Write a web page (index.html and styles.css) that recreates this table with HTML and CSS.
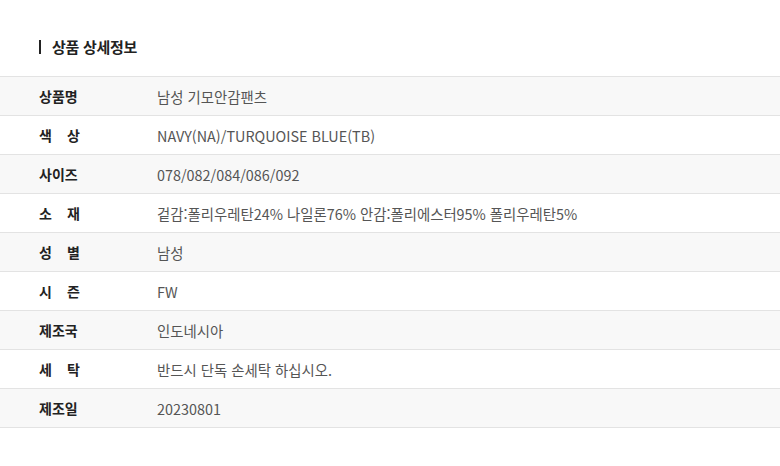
FILE: index.html
```html
<!DOCTYPE html>
<html lang="ko">
<head>
<meta charset="utf-8">
<link rel="stylesheet" href="styles.css">
</head>
<body>
<div class="page">
  <h2 class="title">상품 상세정보</h2>
  <div class="table">
    <div class="row"><div class="label"><span>상품명</span></div><div class="value">남성 기모안감팬츠</div></div>
    <div class="row"><div class="label"><span>색 상</span></div><div class="value">NAVY(NA)/TURQUOISE BLUE(TB)</div></div>
    <div class="row"><div class="label"><span>사이즈</span></div><div class="value">078/082/084/086/092</div></div>
    <div class="row"><div class="label"><span>소 재</span></div><div class="value">겉감:폴리우레탄24% 나일론76% 안감:폴리에스터95% 폴리우레탄5%</div></div>
    <div class="row"><div class="label"><span>성 별</span></div><div class="value">남성</div></div>
    <div class="row"><div class="label"><span>시 즌</span></div><div class="value">FW</div></div>
    <div class="row"><div class="label"><span>제조국</span></div><div class="value">인도네시아</div></div>
    <div class="row"><div class="label"><span>세 탁</span></div><div class="value">반드시 단독 손세탁 하십시오.</div></div>
    <div class="row"><div class="label"><span>제조일</span></div><div class="value">20230801</div></div>
  </div>
</div>
</body>
</html>
```

FILE: styles.css
```css
html, body {
  margin: 0;
  padding: 0;
  background: #fff;
}
body {
  font-family: "Noto Sans CJK KR", "Noto Sans", sans-serif;
  color: #222;
}
.page {
  padding-top: 40px;
}
.title {
  margin: 0 0 22px 39px;
  padding-left: 11px;
  border-left: 2px solid #222;
  font-size: 15px;
  font-weight: 700;
  line-height: 14px;
  height: 14px;
  display: flex;
  align-items: center;
  letter-spacing: -0.3px;
}
.table {
  border-top: 1px solid #e3e3e3;
}
.row {
  display: flex;
  align-items: center;
  height: 38px;
  border-bottom: 1px solid #e3e3e3;
}
.row:nth-child(odd) {
  background: #f8f8f8;
}
.label {
  width: 118px;
  padding-left: 39px;
  box-sizing: content-box;
  flex-shrink: 0;
}
.label span {
  display: block;
  width: 41px;
  font-size: 14px;
  font-weight: 700;
  color: #222;
  text-align: justify;
  text-align-last: justify;
}
.value {
  font-size: 14.4px;
  color: #555;
  font-weight: 400;
  letter-spacing: 0;
}
```
